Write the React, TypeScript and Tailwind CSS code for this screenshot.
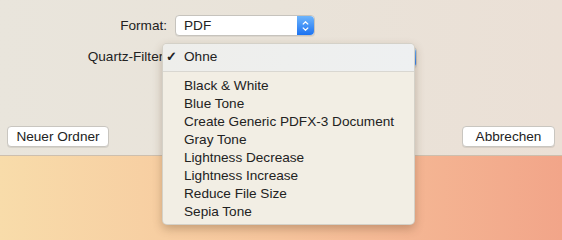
import React from "react";

const filters = [
  "Black & White",
  "Blue Tone",
  "Create Generic PDFX-3 Document",
  "Gray Tone",
  "Lightness Decrease",
  "Lightness Increase",
  "Reduce File Size",
  "Sepia Tone",
];

function Stepper() {
  return (
    <span className="flex h-full w-[17px] flex-col items-center justify-center gap-[2px] rounded-r-[4px] bg-gradient-to-b from-[#6db4fb] to-[#1a72f1]">
      <svg width="7" height="4" viewBox="0 0 7 4">
        <path d="M0.8 3.4 L3.5 0.8 L6.2 3.4" fill="none" stroke="#fff" strokeWidth="1.3" />
      </svg>
      <svg width="7" height="4" viewBox="0 0 7 4">
        <path d="M0.8 0.6 L3.5 3.2 L6.2 0.6" fill="none" stroke="#fff" strokeWidth="1.3" />
      </svg>
    </span>
  );
}

function PopUp({ value, width }: { value: string; width: string }) {
  return (
    <div
      className={`flex h-[21px] ${width} items-stretch rounded-[4px] border border-[#c6c3bd] bg-white shadow-[0_1px_0_rgba(0,0,0,0.06)]`}
    >
      <span className="flex flex-1 items-center pl-[8px] pt-[1px] text-[#222]">{value}</span>
      <Stepper />
    </div>
  );
}

function Button({ label, width }: { label: string; width: string }) {
  return (
    <div
      className={`flex h-[21px] ${width} items-center justify-center rounded-[4px] border border-[#c9c6c0] bg-white pt-[1px] text-[#222] shadow-[0_1px_0_rgba(0,0,0,0.08)]`}
    >
      {label}
    </div>
  );
}

export default function App() {
  return (
    <div className="relative flex h-[240px] w-[562px] flex-col overflow-hidden font-['Liberation_Sans',Arial,sans-serif] text-[13.6px] text-[#222]">
      <div className="flex h-[156px] flex-col border-b border-[#cdbfae] bg-gradient-to-r from-[#e9e5dc] via-[#e9e3d9] to-[#ebe0d6] shadow-[0_1px_2px_rgba(120,80,40,0.3)]">
        <div className="flex flex-col gap-[10px] pt-[15px]">
          <div className="flex items-center">
            <span className="w-[167px] pt-[1px] text-right">Format:</span>
            <span className="ml-[8px]">
              <PopUp value="PDF" width="w-[140px]" />
            </span>
          </div>
          <div className="flex items-center">
            <span className="w-[167px] pt-[1px] text-right">Quartz-Filter:</span>
            <span className="ml-[8px]">
              <PopUp value="" width="w-[242px]" />
            </span>
          </div>
        </div>
        <div className="mt-auto flex justify-between px-[7px] pb-[8px]">
          <Button label="Neuer Ordner" width="w-[102px]" />
          <Button label="Abbrechen" width="w-[93px]" />
        </div>
      </div>
      <div className="flex-1 bg-gradient-to-r from-[#f8dcaa] via-[#f6c49c] to-[#f2a589]" />

      <div className="absolute left-[162px] top-[43px] flex w-[253px] flex-col overflow-hidden rounded-[5px] border border-[rgba(0,0,0,0.12)] bg-[#f2eee4] shadow-[0_4px_10px_rgba(90,60,30,0.3)]">
        <div className="bg-gradient-to-r from-[#eeeeeb] to-[#eef0f1] pt-[4px]">
          <div className="flex h-[18px] items-center">
            <span className="w-[14px] text-right text-[13px] font-bold">✓</span>
            <span className="ml-[7px]">Ohne</span>
          </div>
          <div className="h-[5px]" />
        </div>
        <div className="h-[1px] bg-[#d9d7d1]" />
        <div className="flex flex-col pb-[3px] pt-[5px]">
          {filters.map((f) => (
            <div key={f} className="flex h-[18px] items-center pl-[21px] pt-[1px]">
              {f}
            </div>
          ))}
        </div>
      </div>
    </div>
  );
}
